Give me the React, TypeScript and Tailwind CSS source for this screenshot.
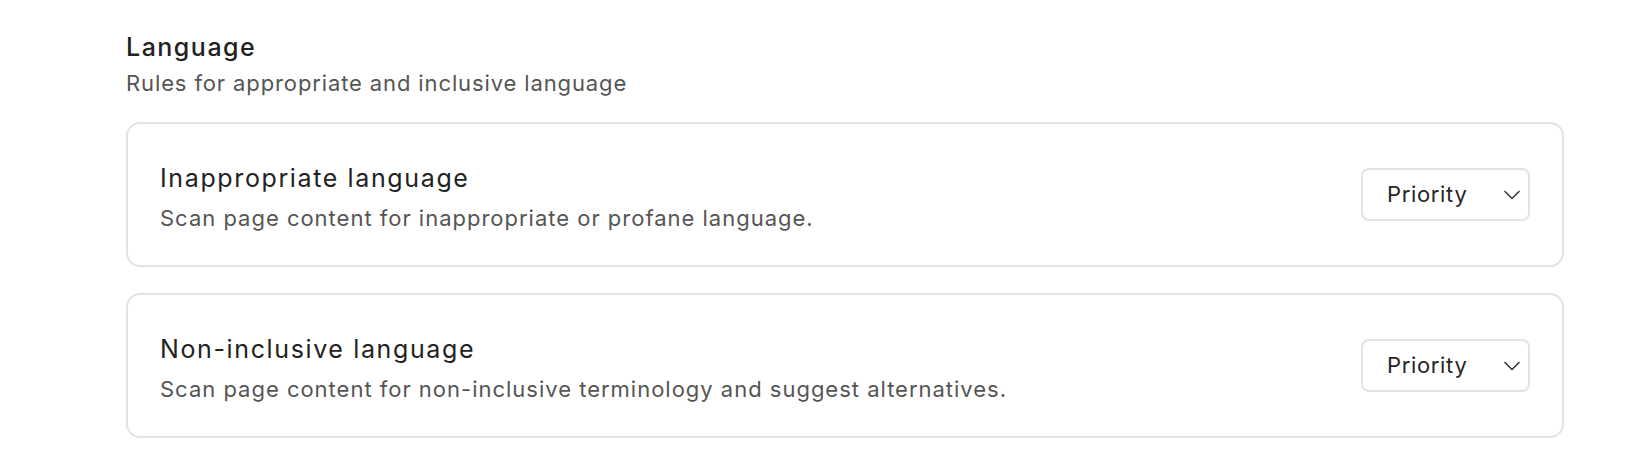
import React, { useState } from 'react';

interface Rule {
  id: string;
  title: string;
  description: string;
  level: string;
}

const rules: Rule[] = [
  {
    id: 'inappropriate',
    title: 'Inappropriate language',
    description: 'Scan page content for inappropriate or profane language.',
    level: 'Priority',
  },
  {
    id: 'non-inclusive',
    title: 'Non-inclusive language',
    description: 'Scan page content for non-inclusive terminology and suggest alternatives.',
    level: 'Priority',
  },
];

const Chevron = () => (
  <svg width="16" height="10" viewBox="0 0 16 10" fill="none" className="text-[#333]">
    <path d="M1 1.5l7 7 7-7" stroke="currentColor" strokeWidth="1.5" strokeLinecap="round" strokeLinejoin="round" />
  </svg>
);

const LevelSelect: React.FC<{ value: string }> = ({ value }) => {
  const [open, setOpen] = useState(false);
  return (
    <button
      type="button"
      onClick={() => setOpen(!open)}
      className="flex items-center justify-between w-[169px] h-[53px] pl-[24px] pr-[8px] border-2 border-[#e3e3e3] rounded-[8px] bg-white text-[22px] tracking-[0.03em] text-[#262626]"
    >
      <span>{value}</span>
      <Chevron />
    </button>
  );
};

export default function App() {
  return (
    <div className="min-h-[471px] bg-white pt-[31px] pl-[126px] font-['Inter',sans-serif]">
      <div className="w-[1438px]">
        {/* Section header */}
        <h2 className="text-[25px] leading-[32px] font-medium tracking-[0.06em] text-[#222]">Language</h2>
        <p className="mt-[5px] text-[22px] leading-[30px] tracking-[0.04em] text-[#555]">
          Rules for appropriate and inclusive language
        </p>

        <div className="mt-[24px] flex flex-col gap-[26px]">
          {rules.map(rule => (
            <div
              key={rule.id}
              className="flex items-center justify-between h-[145px] px-[32px] border-2 border-[#e3e3e3] rounded-[14px]"
            >
              <div className="flex flex-col gap-[8px] pt-[4px]">
                <span className="text-[25px] leading-[34px] tracking-[0.065em] text-[#222]">{rule.title}</span>
                <span className="text-[22px] leading-[30px] tracking-[0.045em] text-[#555]">{rule.description}</span>
              </div>
              <LevelSelect value={rule.level} />
            </div>
          ))}
        </div>
      </div>
    </div>
  );
}
